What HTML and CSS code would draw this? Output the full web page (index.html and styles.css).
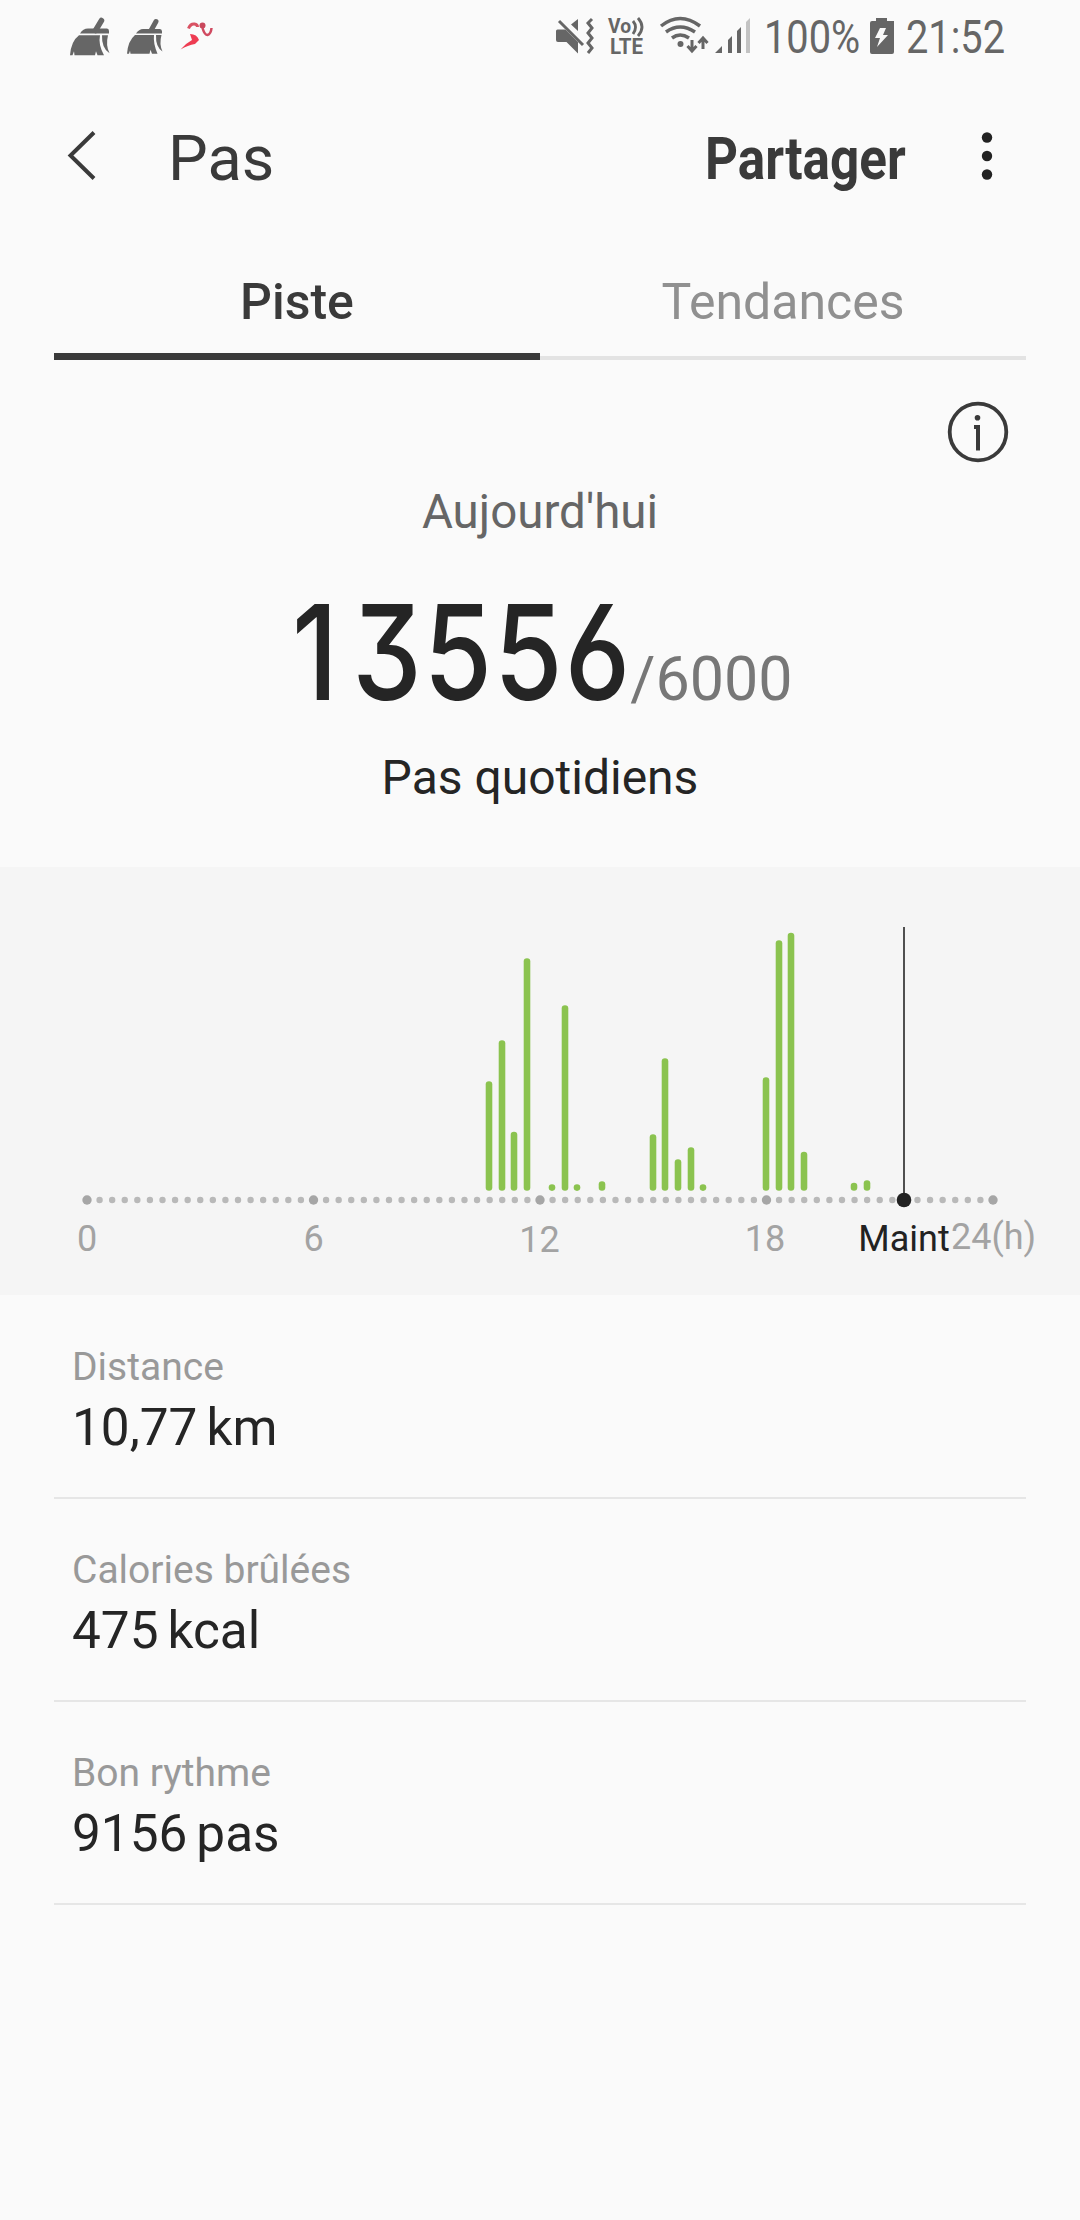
FILE: index.html
```html
<!DOCTYPE html>
<html lang="fr">
<head>
  <meta charset="utf-8">
  <title>Pas</title>
  <link rel="stylesheet" href="styles.css">
</head>
<body>
  <div class="status-bar">
    <div class="status-left">
      <svg width="42" height="75" viewBox="69 0 42 75" fill="#666">
        <path d="M101.500 20.500l-6 10" stroke="#666" stroke-width="5.500" stroke-linecap="round"/>
        <path d="M80 33.500q3-5 8-5h19q2 0 2 2.500v2.500z"/>
        <path d="M79 35.200h21q-2 9 4 20h-6.500l-1.500-4-1 4H74.500l-.5-4-1.500 4H70q1-14 9-20z"/>
        <path d="M102 35.200h6q-2.500 10 1.500 18-8-5-7.500-18z"/>
      </svg>
      <svg width="38" height="75" viewBox="125 0 38 75" fill="#666">
        <path d="M155 21.500l-5 9" stroke="#666" stroke-width="5" stroke-linecap="round"/>
        <path d="M135 33.500q3-4.500 7-4.500h17q2 0 2 2.500v2z"/>
        <path d="M134 35h19q-1 8 3.500 18.800h-5.500l-1.500-4-1 4H129.500l-.5-3-1 3H126q1-13 8-18.800z"/>
        <path d="M155 35h5.500q-2.500 9 1 16.500-7-4.500-6.500-16.500z"/>
      </svg>
      <svg width="36" height="75" viewBox="181 0 36 75">
        <circle cx="204.500" cy="25.500" r="3" fill="#c9485c"/>
        <path d="M190.500 28.500q2-5 6-4.500 3 .5 3 3" fill="none" stroke="#d95263" stroke-width="3"/>
        <path d="M213.500 28q-.5 6-4 7-3 0-5-7" fill="none" stroke="#d04a60" stroke-width="2.500"/>
        <path d="M192 34q7 0 9 6l-4 4q-7 1-14.500 5.500 5-6 11.500-9.500z" fill="#ee3c52"/>
      </svg>
    </div>
    <div class="status-right">
      <svg width="40" height="75" viewBox="555 0 40 75">
        <path d="M556 31q0-1.500 1.500-1.500H566l12 11.500v12.500L566.500 42H558q-2 0-2-2zM571 24.500l7-5.500v12z" fill="#666"/>
        <path d="M560 20l24 24" stroke="#fafafa" stroke-width="6"/>
        <path d="M559 21l24 24" stroke="#666" stroke-width="3"/>
        <path d="M592 19l-4 4 4 5-4 5 4 5-4 5 4 5-4 5" fill="none" stroke="#666" stroke-width="3"/>
      </svg>
      <svg class="volte" width="38" height="75" viewBox="607 0 38 75" fill="#666">
        <text x="608" y="33" font-size="20" font-weight="700" textLength="23" lengthAdjust="spacingAndGlyphs">Vo</text>
        <text x="610" y="54" font-size="21.500" font-weight="700" textLength="33" lengthAdjust="spacingAndGlyphs">LTE</text>
        <path d="M633 21q5 6 0 13M638 18q8 9 0 18" fill="none" stroke="#666" stroke-width="2.800"/>
      </svg>
      <svg class="wifi" width="50" height="75" viewBox="659 0 50 75">
        <g fill="none" stroke="#666" stroke-width="3.500">
          <path d="M661 26q19-15 39 0M666 32q14-10 29 0M672 38q8-6 17 0"/>
          <path d="M692 40v10M687.500 46l4.500 5 4.500-5M703 49V39M698.500 43l4.500-5 4.500 5" stroke-width="3"/>
        </g>
        <circle cx="680.500" cy="44" r="3" fill="#666"/>
      </svg>
      <svg class="signal" width="36" height="75" viewBox="714 0 36 75">
        <path d="M715 53l7-7v7zM728 40l4-4v17h-4zM737 31l4-4v26h-4z" fill="#666"/>
        <path d="M746 22l4-4v35h-4z" fill="#c3c3c3"/>
      </svg>
      <span class="percent"><span class="condensed">100%</span></span>
      <svg class="battery" width="24" height="75" viewBox="870 0 24 75">
        <path d="M876 21v-3h11v3h7v31q0 2-2 2h-20q-2 0-2-2V23q0-2 2-2z" fill="#666"/>
        <path d="M880 28h6l-3 7h5l-11 12 3-9h-5z" fill="#fafafa"/>
      </svg>
      <span class="clock"><span class="condensed">21:52</span></span>
    </div>
  </div>

  <div class="app-bar">
    <svg class="back" width="30" height="52" viewBox="0 0 30 52">
      <path d="M27 2.500L3.500 25.500 27 48.500" fill="none" stroke="#3a3a3a" stroke-width="4"/>
    </svg>
    <h1>Pas</h1>
    <div class="share"><span>Partager</span></div>
    <svg class="more" width="12" height="50" viewBox="0 0 12 50" fill="#222">
      <circle cx="6" cy="6.500" r="5.200"/>
      <circle cx="6" cy="25" r="5.200"/>
      <circle cx="6" cy="43.500" r="5.200"/>
    </svg>
  </div>

  <div class="tabs">
    <div class="tab active">Piste</div>
    <div class="tab">Tendances</div>
  </div>

  <div class="summary">
    <svg class="info" width="62" height="62" viewBox="0 0 62 62">
      <circle cx="31" cy="31" r="28.300" fill="none" stroke="#3a3a3a" stroke-width="3.800"/>
      <circle cx="30.500" cy="16.700" r="2.800" fill="#3a3a3a"/>
      <path d="M27 26h4v23.500" fill="none" stroke="#3a3a3a" stroke-width="4"/>
    </svg>
    <div class="today">Aujourd'hui</div>
    <div class="count">
      <span class="steps"><span class="digits"><span class="one">1</span>3556</span></span>
      <span class="goal">/6000</span>
    </div>
    <div class="caption">Pas quotidiens</div>
  </div>

  <svg class="chart" width="1080" height="428" viewBox="0 867 1080 428">
    <g class="bars">
      <path d="M489 1084.500V1187.500"/>
      <path d="M502 1043.500V1187.500"/>
      <path d="M514 1135V1187.500"/>
      <path d="M527 961.500V1187.500"/>
      <path d="M552 1187.500v.1"/>
      <path d="M565 1008.500V1187.500"/>
      <path d="M577 1187.500v.1"/>
      <path d="M602 1184.500V1187.500"/>
      <path d="M653 1137.500V1187.500"/>
      <path d="M665 1061.500V1187.500"/>
      <path d="M678 1162.500V1187.500"/>
      <path d="M691 1150.500V1187.500"/>
      <path d="M703 1187.500v.1"/>
      <path d="M766 1080.500V1187.500"/>
      <path d="M779 943.500V1187.500"/>
      <path d="M791 936V1187.500"/>
      <path d="M804 1155V1187.500"/>
      <path d="M854 1186V1187.500"/>
      <path d="M867 1183.500V1187.500"/>
    </g>
    <!-- one dot every 20 minutes -->
    <path class="axis" d="M87 1200H993.500"/>
    <g class="hours">
      <circle cx="87" cy="1200" r="4.700"/>
      <circle cx="313.500" cy="1200" r="4.700"/>
      <circle cx="540" cy="1200" r="4.700"/>
      <circle cx="766.500" cy="1200" r="4.700"/>
      <circle cx="993" cy="1200" r="4.700"/>
    </g>
    <path class="now-line" d="M904 927V1200"/>
    <circle class="now" cx="904" cy="1200" r="7.300"/>
    <g class="labels">
      <text x="87" y="1251">0</text>
      <text x="313.500" y="1251">6</text>
      <text x="539.500" y="1252">12</text>
      <text x="765" y="1251">18</text>
      <text class="now" x="904" y="1251">Maint</text>
      <text x="993.500" y="1249">24(h)</text>
    </g>
  </svg>

  <div class="details">
    <div class="row">
      <div class="label">Distance</div>
      <div class="value"><span>10,77</span><span>km</span></div>
    </div>
    <div class="row">
      <div class="label">Calories brûlées</div>
      <div class="value"><span>475</span><span>kcal</span></div>
    </div>
    <div class="row">
      <div class="label">Bon rythme</div>
      <div class="value"><span>9156</span><span>pas</span></div>
    </div>
  </div>
</body>
</html>
```
FILE: styles.css
```css
* {
    box-sizing: border-box;
}

body {
    margin: 0;
    width: 1080px;
    height: 2220px;
    background: #fafafa;
    color: #252525;
    font-family: Roboto, sans-serif;
    overflow: hidden;
}

svg {
    display: block;
    flex: none;
}

.status-bar {
    display: flex;
    justify-content: space-between;
    height: 75px;
    padding: 0 76px 0 69px;
    color: #666;
    font-size: 46px;
    line-height: 75px;
}

.status-left, .status-right {
    display: flex;
}

.status-left {
    gap: 15px;
}

.volte {
    margin-left: 12px;
}

.wifi {
    margin-left: 14px;
}

.signal {
    margin-left: 5px;
}

.condensed {
    display: inline-block;
    transform: scaleX(0.865);
    transform-origin: left;
}

.percent {
    width: 91px;
    margin-left: 14px;
}

.battery {
    margin-left: 15px;
}

.clock {
    width: 98px;
    margin-left: 12px;
}

.app-bar {
    display: flex;
    align-items: center;
    height: 168px;
    padding: 0 87px 0 67px;
    color: #3a3a3a;
}

.back, .more {
    margin-bottom: 6px;
}

h1 {
    margin: 0 0 0 71px;
    font-size: 63px;
    font-weight: 400;
    line-height: 82px;
}

.share {
    width: 200px;
    margin-left: auto;
    margin-right: 76px;
    font-size: 58.6px;
    font-weight: 700;
    line-height: 80px;
}

.share span {
    display: inline-block;
    transform: scaleX(0.875);
    transform-origin: left;
}

.tabs {
    display: flex;
    padding: 0 54px;
    height: 117px;
    line-height: 119px;
    font-size: 50px;
    text-align: center;
}

.tab {
    flex: 1;
    height: 117px;
    color: #909090;
    box-shadow: inset 0 -4px #e3e3e3;
}

.tab.active {
    color: #3a3a3a;
    font-weight: 500;
    box-shadow: inset 0 -7px #3a3a3a;
}

.summary {
    display: flex;
    flex-direction: column;
    align-items: center;
    height: 507px;
    padding-top: 41px;
}

.info {
    align-self: flex-end;
    margin-right: 71px;
}

.today {
    margin-top: 21px;
    color: #666;
    font-size: 47.5px;
    line-height: 56px;
}

.count {
    display: flex;
    align-items: baseline;
    height: 120px;
    margin-top: 53px;
    line-height: 120px;
}

.steps {
    width: 343px;
    padding-left: 5px;
    font-family: Inter, sans-serif;
    font-size: 131.6px;
    font-weight: 500;
    letter-spacing: 2.5px;
    font-feature-settings: "cv03", "cv09";
}

.digits {
    display: inline-block;
    transform: scaleX(0.84);
    transform-origin: left;
}

.one {
    letter-spacing: 17px;
}

.goal {
    color: #777;
    font-size: 61px;
}

.caption {
    margin-top: 37px;
    font-size: 48px;
    line-height: 56px;
}

.chart {
    background: #f5f5f5;
}

.bars {
    stroke: #8bc34f;
    stroke-width: 6.6;
    stroke-linecap: round;
}

.axis {
    stroke: #b9b9b9;
    stroke-width: 6.4;
    stroke-linecap: round;
    stroke-dasharray: 0 12.583;
}

.hours {
    fill: #a6a6a6;
}

.now-line {
    stroke: #505050;
    stroke-width: 2;
}

.labels {
    fill: #a3a3a3;
    font-size: 36px;
    text-anchor: middle;
}

.chart .now {
    fill: #222;
}

.details {
    padding: 1px 54px 0;
}

.row {
    height: 203px;
    padding: 46px 18px 0;
    border-bottom: 2px solid #e6e6e6;
}

.label {
    color: #999;
    font-size: 39px;
    line-height: 50px;
}

.value {
    display: flex;
    gap: 9px;
    font-size: 51.3px;
    line-height: 72px;
}
```
